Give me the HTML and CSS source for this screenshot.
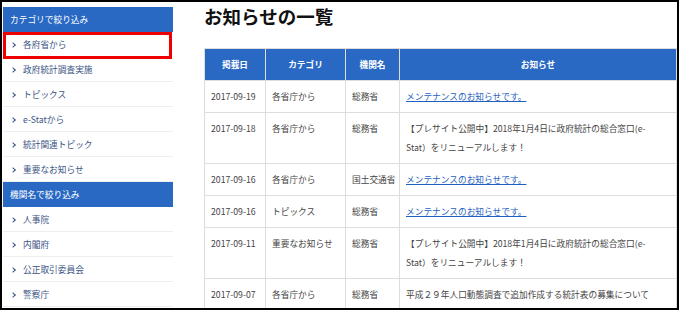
FILE: index.html
```html
<!DOCTYPE html>
<html lang="ja">
<head>
    <meta charset="UTF-8">
    <meta name="viewport" content="width=device-width, initial-scale=1.0">
    <title>お知らせの一覧</title>
    <link rel="stylesheet" href="styles.css">
</head>
<body>
    <div class="frame">
        <aside class="sidebar">
            <div class="side-heading">カテゴリで絞り込み</div>
            <ul class="side-list">
                <li class="side-item is-marked">各府省から</li>
                <li class="side-item">政府統計調査実施</li>
                <li class="side-item">トピックス</li>
                <li class="side-item">e-Statから</li>
                <li class="side-item">統計関連トピック</li>
                <li class="side-item">重要なお知らせ</li>
            </ul>
            <div class="side-heading">機関名で絞り込み</div>
            <ul class="side-list">
                <li class="side-item">人事院</li>
                <li class="side-item">内閣府</li>
                <li class="side-item">公正取引委員会</li>
                <li class="side-item">警察庁</li>
            </ul>
        </aside>

        <main class="content">
            <h1 class="page-title">お知らせの一覧</h1>
            <table class="news-table">
                <colgroup>
                    <col class="col-date">
                    <col class="col-cat">
                    <col class="col-org">
                    <col>
                </colgroup>
                <thead>
                    <tr>
                        <th>掲載日</th>
                        <th>カテゴリ</th>
                        <th>機関名</th>
                        <th>お知らせ</th>
                    </tr>
                </thead>
                <tbody>
                    <tr>
                        <td>2017-09-19</td>
                        <td>各省庁から</td>
                        <td class="org">総務省</td>
                        <td class="notice"><a href="#">メンテナンスのお知らせです。</a></td>
                    </tr>
                    <tr>
                        <td>2017-09-18</td>
                        <td>各省庁から</td>
                        <td class="org">総務省</td>
                        <td class="notice">【プレサイト公開中】2018年1月4日に政府統計の総合窓口(e-Stat）をリニューアルします！</td>
                    </tr>
                    <tr>
                        <td>2017-09-16</td>
                        <td>各省庁から</td>
                        <td class="org">国土交通省</td>
                        <td class="notice"><a href="#">メンテナンスのお知らせです。</a></td>
                    </tr>
                    <tr>
                        <td>2017-09-16</td>
                        <td>トピックス</td>
                        <td class="org">総務省</td>
                        <td class="notice"><a href="#">メンテナンスのお知らせです。</a></td>
                    </tr>
                    <tr>
                        <td>2017-09-11</td>
                        <td>重要なお知らせ</td>
                        <td class="org">総務省</td>
                        <td class="notice">【プレサイト公開中】2018年1月4日に政府統計の総合窓口(e-Stat）をリニューアルします！</td>
                    </tr>
                    <tr>
                        <td>2017-09-07</td>
                        <td>各省庁から</td>
                        <td class="org">総務省</td>
                        <td class="notice">平成２９年人口動態調査で追加作成する統計表の募集について</td>
                    </tr>
                </tbody>
            </table>
        </main>
    </div>
</body>
</html>
```

FILE: styles.css
```css
:root {
    --brand-blue: #2969c4;
    --side-text: #3a5384;
    --text: #444444;
    --link: #1f5fc0;
    --line: #dddddd;
    --side-line: #eeeeee;
}

* {
    margin: 0;
    padding: 0;
    box-sizing: border-box;
}

body {
    background-color: #ffffff;
    font-family: "Noto Sans CJK JP", "Noto Sans", sans-serif;
    font-size: 8.7px;
    color: var(--text);
}

.frame {
    width: 679px;
    height: 310px;
    border: 2px solid #000000;
    display: flex;
    overflow: hidden;
}

/* sidebar */
.sidebar {
    width: 170px;
    margin: 5px 0 0 1px;
    flex-shrink: 0;
}

.side-heading {
    height: 25px;
    line-height: 25px;
    padding-left: 7px;
    background-color: var(--brand-blue);
    color: #ffffff;
}

.side-list {
    list-style: none;
}

.side-item {
    position: relative;
    height: 25px;
    line-height: 25px;
    padding-left: 20px;
    border-bottom: 1px solid var(--side-line);
    color: var(--side-text);
}

.side-item::before {
    content: "";
    position: absolute;
    left: 8px;
    top: 11px;
    width: 3px;
    height: 3px;
    border-top: 1px solid var(--side-text);
    border-right: 1px solid var(--side-text);
    transform: rotate(45deg);
}

.side-item.is-marked::after {
    content: "";
    position: absolute;
    top: 0;
    left: 0;
    right: 1px;
    bottom: -3px;
    border: 3px solid #ee0000;
}

/* main */
.content {
    flex: 1;
    margin-left: 31px;
    padding-top: 2px;
}

.page-title {
    font-size: 18.5px;
    font-weight: bold;
    line-height: 24px;
    color: #111111;
    margin-bottom: 20px;
}

.news-table {
    width: 100%;
    border-collapse: collapse;
    table-layout: fixed;
}

.col-date { width: 61px; }
.col-cat { width: 80px; }
.col-org { width: 54px; }

.news-table th,
.news-table td {
    border: 1px solid var(--line);
    padding: 6px 6px;
    line-height: 19px;
    vertical-align: top;
    text-align: left;
    white-space: normal;
}

.news-table th {
    background-color: var(--brand-blue);
    color: #ffffff;
    font-weight: bold;
    text-align: center;
}

.news-table td.org {
    padding-right: 2px;
    white-space: nowrap;
}

.news-table td.notice {
    padding-right: 20px;
}

.news-table a {
    color: var(--link);
    text-decoration: underline;
}
```
